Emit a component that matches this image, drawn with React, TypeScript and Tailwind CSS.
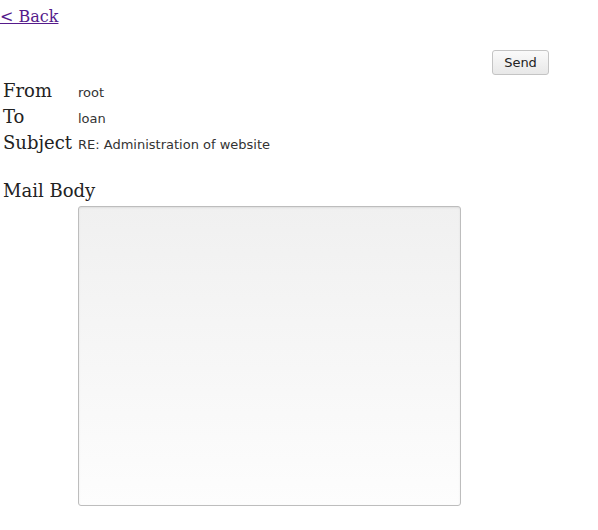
export default function App() {
  const rows = [
    ["From", "root"],
    ["To", "loan"],
    ["Subject", "RE: Administration of website"],
  ];
  return (
    <div className="min-h-[530px] bg-white font-['DejaVu_Serif',serif] text-[#222]">
      <div className="pt-[5px] pl-0">
        <a href="#" className="text-[16px] text-[#551a8b] underline">
          &lt; Back
        </a>
      </div>

      <div className="mt-[21px] flex justify-end pr-[49px]">
        <button className="h-[25px] w-[57px] rounded-[3px] border border-[#c4c4c4] bg-gradient-to-b from-[#fafafa] to-[#e8e8e8] font-['DejaVu_Sans',sans-serif] text-[13px] text-[#222]">
          Send
        </button>
      </div>

      <div className="mt-[3px] pl-[3px]">
        {rows.map(([label, value]) => (
          <div key={label} className="flex h-[26px] items-baseline leading-[26px]">
            <div className="w-[75px] text-[18px] text-[#222]">{label}</div>
            <div className="font-['DejaVu_Sans',sans-serif] text-[13px] text-[#333]">{value}</div>
          </div>
        ))}
      </div>

      <div className="mt-[24px] pl-[3px] text-[18px] leading-[22px]">Mail Body</div>
      <div className="mt-[4px] pl-[78px]">
        <textarea className="block h-[300px] w-[383px] resize-none rounded-[3px] border border-[#bdbdbd] bg-gradient-to-b from-[#f0f0f0] to-[#fdfdfd] shadow-[inset_0_1px_2px_rgba(0,0,0,0.08)] outline-none" />
      </div>
    </div>
  );
}
